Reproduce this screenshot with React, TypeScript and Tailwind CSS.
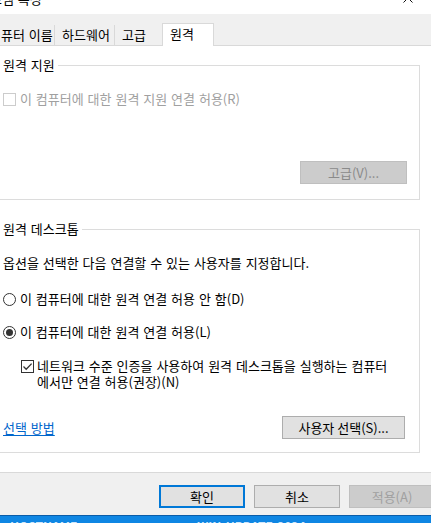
import React from "react";

function Checkbox({ checked, disabled }: { checked?: boolean; disabled?: boolean }) {
  return (
    <span
      className={`flex h-[13px] w-[13px] shrink-0 items-center justify-center border bg-white ${
        disabled ? "border-[#cccccc]" : "border-[#333333]"
      }`}
    >
      {checked && (
        <svg width="11" height="11" viewBox="0 0 11 11">
          <path d="M1.5 5.5 L4.2 8.2 L9.6 2.6" fill="none" stroke="#333333" strokeWidth="1.3" />
        </svg>
      )}
    </span>
  );
}

function Radio({ checked }: { checked?: boolean }) {
  return (
    <span className="flex h-[13px] w-[13px] shrink-0 items-center justify-center rounded-full border border-[#333333] bg-white">
      {checked && <span className="h-[7px] w-[7px] rounded-full bg-[#333333]" />}
    </span>
  );
}

function Tabs() {
  return (
    <div className="flex h-[32px] items-end">
      <div className="-ml-[18px] flex h-[21px] w-[73px] shrink-0 items-center overflow-hidden whitespace-nowrap border-b border-r border-[#d9d9d9] pl-[7px]">
        컴퓨터 이름
      </div>
      <div className="flex h-[21px] w-[60px] shrink-0 items-center whitespace-nowrap border-b border-r border-[#d9d9d9] pl-[7px]">
        하드웨어
      </div>
      <div className="flex h-[21px] w-[47px] shrink-0 items-center border-b border-[#d9d9d9] pl-[7px]">
        고급
      </div>
      <div className="flex h-[23px] w-[52px] shrink-0 items-center border-x border-t border-[#d9d9d9] bg-white pb-[3px] pl-[7px]">
        원격
      </div>
      <div className="h-[21px] flex-1 border-b border-[#d9d9d9]" />
    </div>
  );
}

function Page() {
  return (
    <div className="h-[427px] border-b border-[#d9d9d9] bg-white">
      <fieldset className="mt-[11px] w-[420px] border-y border-r border-l-0 border-[#dcdcdc] pb-[15px]">
        <legend className="px-[3px] leading-4">원격 지원</legend>
        <div className="mt-[18px] flex h-4 items-center gap-[4px] pl-[3px] text-[#a0a0a0]">
          <Checkbox disabled />
          <span>이 컴퓨터에 대한 원격 지원 연결 허용(R)</span>
        </div>
        <div className="mt-[54px] flex justify-end pr-[12px]">
          <button
            type="button"
            className="h-[23px] w-[107px] border border-[#bfbfbf] bg-[#cccccc] text-[#8a8a8a]"
          >
            고급(V)...
          </button>
        </div>
      </fieldset>

      <fieldset className="mt-[21px] w-[420px] border-y border-r border-l-0 border-[#dcdcdc] pb-[13px]">
        <legend className="px-[3px] leading-4">원격 데스크톱</legend>
        <p className="mt-[18px] h-4 pl-[3px]">옵션을 선택한 다음 연결할 수 있는 사용자를 지정합니다.</p>
        <div className="mt-[20px] flex h-4 items-center gap-[4px] pl-[3px]">
          <Radio />
          <span>이 컴퓨터에 대한 원격 연결 허용 안 함(D)</span>
        </div>
        <div className="mt-[17px] flex h-4 items-center gap-[4px] pl-[3px]">
          <Radio checked />
          <span>이 컴퓨터에 대한 원격 연결 허용(L)</span>
        </div>
        <div className="mt-[18px] flex items-start gap-[3px] pl-[21px]">
          <span className="mt-[2px]">
            <Checkbox checked />
          </span>
          <span className="whitespace-nowrap">
            네트워크 수준 인증을 사용하여 원격 데스크톱을 실행하는 컴퓨터
            <br />
            에서만 연결 허용(권장)(N)
          </span>
        </div>
        <div className="mt-[26px] flex items-center justify-between pl-[3px] pr-[14px]">
          <a href="#" className="text-[#0066cc] underline underline-offset-2">
            선택 방법
          </a>
          <button type="button" className="h-[23px] w-[123px] border border-[#adadad] bg-[#e1e1e1]">
            사용자 선택(S)...
          </button>
        </div>
      </fieldset>
    </div>
  );
}

export default function App() {
  return (
    <div className="flex h-[523px] w-[431px] flex-col overflow-hidden bg-[#f0f0f0] font-['Noto_Sans_CJK_KR','Noto_Sans',sans-serif] text-[13px] leading-4 text-black [word-spacing:1px]">
      <div className="flex h-[14px] shrink-0 items-start justify-between overflow-hidden bg-white">
        <span className="-ml-[22px] -mt-[9px] whitespace-nowrap">시스템 속성</span>
        <svg className="-mt-[7px] mr-[18px]" width="10" height="10" viewBox="0 0 10 10">
          <path d="M0.5 0.5 L9.5 9.5 M9.5 0.5 L0.5 9.5" stroke="#111111" strokeWidth="1" />
        </svg>
      </div>
      <Tabs />
      <Page />
      <div className="flex h-[42px] shrink-0 gap-[9px] pl-[159px] pt-[12px]">
        <button type="button" className="h-[23px] w-[86px] shrink-0 border-2 border-[#0078d7] bg-[#e1e1e1]">
          확인
        </button>
        <button type="button" className="h-[23px] w-[86px] shrink-0 border border-[#adadad] bg-[#e1e1e1]">
          취소
        </button>
        <button
          type="button"
          className="h-[23px] w-[86px] shrink-0 border border-[#bfbfbf] bg-[#cccccc] text-[#a0a0a0]"
        >
          적용(A)
        </button>
      </div>
      <div className="flex h-[8px] shrink-0 overflow-hidden border-t border-[#0a5ca8] bg-[#0f86e3] text-[12px] font-semibold leading-4 text-[#cfe6fb]">
        <span className="ml-[10px] mt-[2px] whitespace-nowrap">HOSTNAME</span>
        <span className="ml-[120px] mt-[2px] whitespace-nowrap">WIN-UPDATE-2024</span>
      </div>
    </div>
  );
}
